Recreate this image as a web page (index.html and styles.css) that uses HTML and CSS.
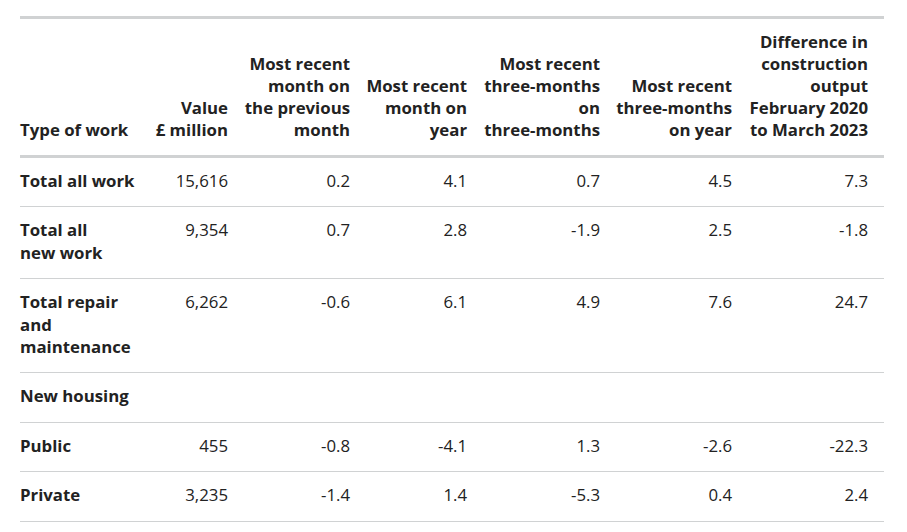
FILE: index.html
```html
<!DOCTYPE html>
<html lang="en">
<head>
<meta charset="utf-8">
<title>Construction output</title>
<link rel="stylesheet" href="styles.css">
</head>
<body>
<div class="wrap">
<table class="data">
<colgroup>
<col class="c1"><col class="c2"><col class="c3"><col class="c4"><col class="c5"><col class="c6"><col class="c7">
</colgroup>
<thead>
<tr>
<th class="left">Type of work</th>
<th>Value<br>£ million</th>
<th>Most recent month on the previous month</th>
<th>Most recent month on year</th>
<th>Most recent <span class="nw">three-months</span> on <span class="nw">three-months</span></th>
<th>Most recent <span class="nw">three-months</span> on year</th>
<th>Difference in construction output February 2020 to March 2023</th>
</tr>
</thead>
<tbody>
<tr><th class="left" scope="row">Total all work</th><td>15,616</td><td>0.2</td><td>4.1</td><td>0.7</td><td>4.5</td><td>7.3</td></tr>
<tr><th class="left" scope="row">Total all<br>new work</th><td>9,354</td><td>0.7</td><td>2.8</td><td>-1.9</td><td>2.5</td><td>-1.8</td></tr>
<tr><th class="left" scope="row">Total repair<br>and<br>maintenance</th><td>6,262</td><td>-0.6</td><td>6.1</td><td>4.9</td><td>7.6</td><td>24.7</td></tr>
<tr><th class="left" scope="row">New housing</th><td></td><td></td><td></td><td></td><td></td><td></td></tr>
<tr><th class="left" scope="row">Public</th><td>455</td><td>-0.8</td><td>-4.1</td><td>1.3</td><td>-2.6</td><td>-22.3</td></tr>
<tr><th class="left" scope="row">Private</th><td>3,235</td><td>-1.4</td><td>1.4</td><td>-5.3</td><td>0.4</td><td>2.4</td></tr>
</tbody>
</table>
</div>
</body>
</html>
```

FILE: styles.css
```css
html, body {
  margin: 0;
  padding: 0;
  background: #ffffff;
}

body {
  font-family: "Open Sans", "Liberation Sans", sans-serif;
  font-size: 16.8px;
  color: #222222;
}

.wrap {
  padding: 16px 23px 0 20px;
}

.data {
  width: 864px;
  border-collapse: collapse;
  table-layout: fixed;
  border-top: 3px solid #d0d2d3;
}

.c1 { width: 132px; }
.c2 { width: 92px; }
.c3 { width: 122px; }
.c4 { width: 117px; }
.c5 { width: 133px; }
.c6 { width: 132px; }
.c7 { width: 136px; }

.data th,
.data td {
  padding: 12px 16px 14px 0;
  line-height: 22.4px;
  text-align: right;
  vertical-align: top;
}

.data thead th {
  font-weight: 700;
  vertical-align: bottom;
  padding-top: 12px;
  padding-bottom: 14px;
  line-height: 22px;
  border-bottom: 3px solid #d0d2d3;
}

.data tbody tr {
  border-bottom: 1px solid #d0d2d3;
}

.data tbody th {
  font-weight: 700;
}

.data td {
  font-weight: 400;
}

.data .left {
  text-align: left;
}

.nw {
  white-space: nowrap;
}
```
